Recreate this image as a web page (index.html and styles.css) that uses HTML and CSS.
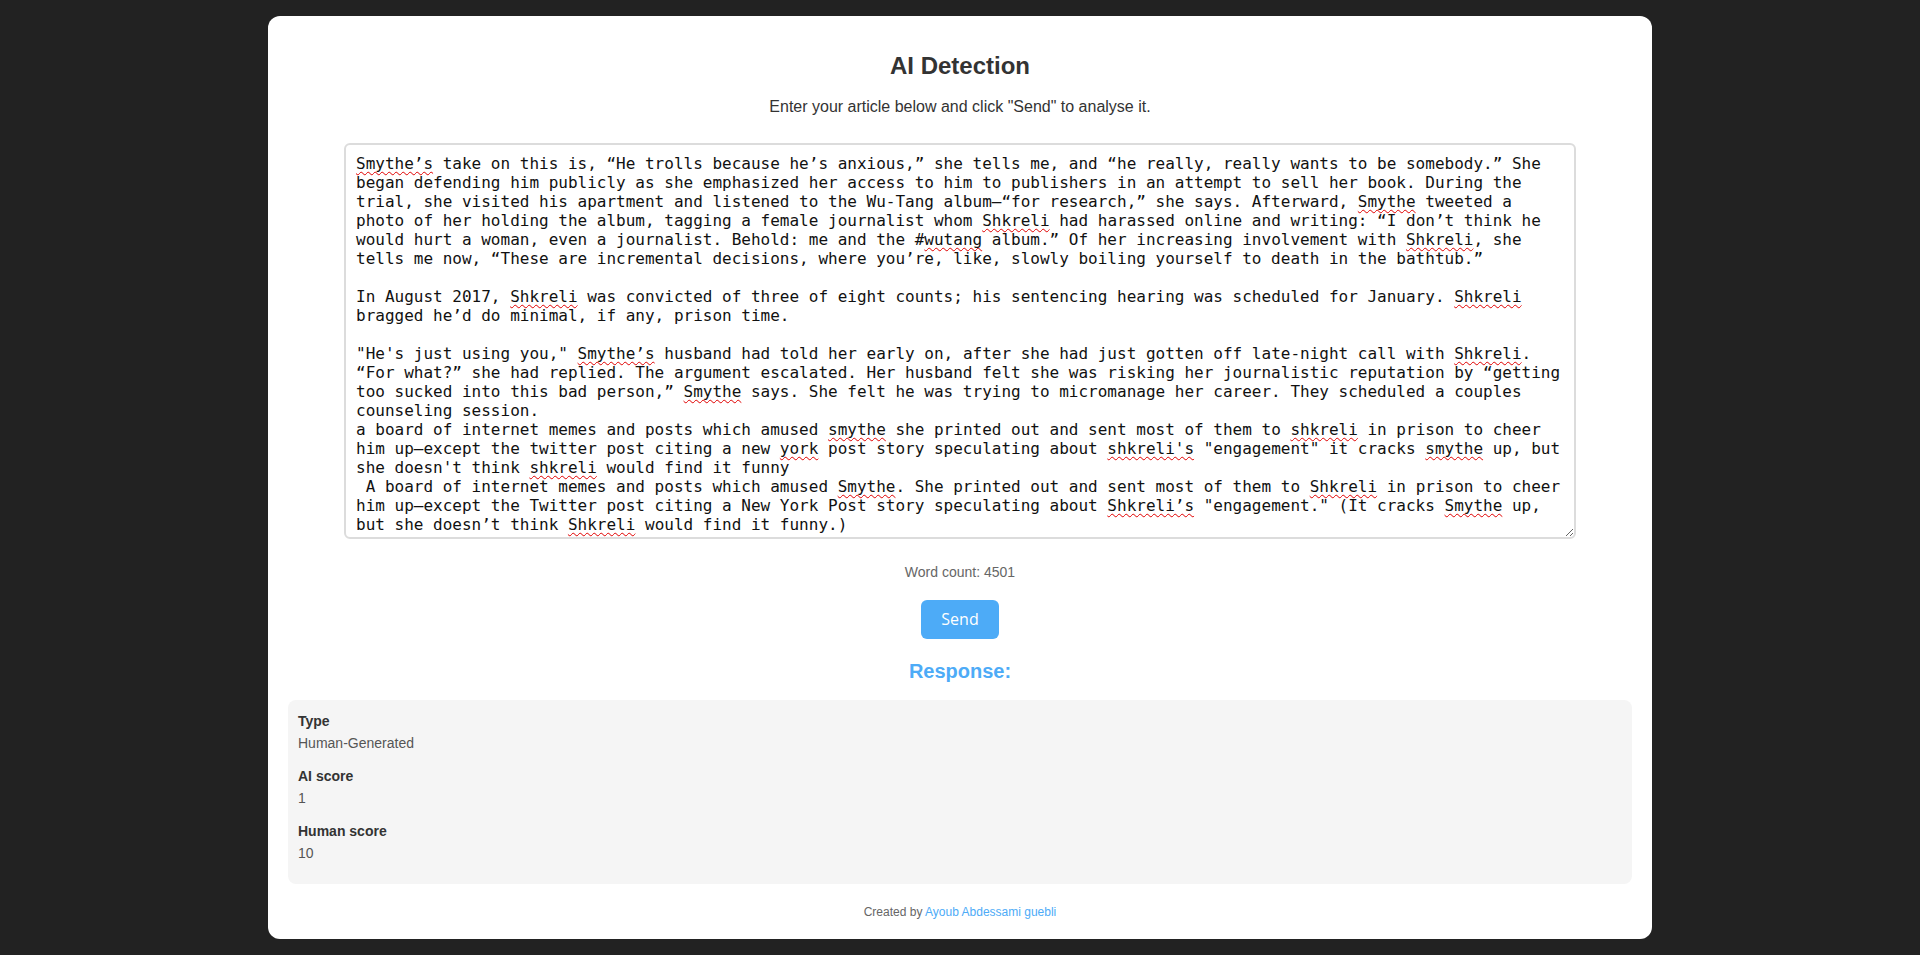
FILE: index.html
```html
<!DOCTYPE html>
<html lang="en">
<head>
<meta charset="utf-8">
<title>AI Detection</title>
<link rel="stylesheet" href="styles.css">
</head>
<body>
<main class="card">
  <h1 class="title">AI Detection</h1>
  <p class="subtitle">Enter your article below and click "Send" to analyse it.</p>
  <div class="editor" role="textbox" aria-multiline="true">
    <div class="ln"><span class="sp">Smythe’s</span> take on this is, “He trolls because he’s anxious,” she tells me, and “he really, really wants to be somebody.” She</div>
    <div class="ln">began defending him publicly as she emphasized her access to him to publishers in an attempt to sell her book. During the</div>
    <div class="ln">trial, she visited his apartment and listened to the Wu-Tang album—“for research,” she says. Afterward, <span class="sp">Smythe</span> tweeted a</div>
    <div class="ln">photo of her holding the album, tagging a female journalist whom <span class="sp">Shkreli</span> had harassed online and writing: “I don’t think he</div>
    <div class="ln">would hurt a woman, even a journalist. Behold: me and the #<span class="sp">wutang</span> album.” Of her increasing involvement with <span class="sp">Shkreli</span>, she</div>
    <div class="ln">tells me now, “These are incremental decisions, where you’re, like, slowly boiling yourself to death in the bathtub.”</div>
    <div class="ln blank"></div>
    <div class="ln">In August 2017, <span class="sp">Shkreli</span> was convicted of three of eight counts; his sentencing hearing was scheduled for January. <span class="sp">Shkreli</span></div>
    <div class="ln">bragged he’d do minimal, if any, prison time.</div>
    <div class="ln blank"></div>
    <div class="ln">"He's just using you," <span class="sp">Smythe’s</span> husband had told her early on, after she had just gotten off late-night call with <span class="sp">Shkreli</span>.</div>
    <div class="ln">“For what?” she had replied. The argument escalated. Her husband felt she was risking her journalistic reputation by “getting</div>
    <div class="ln">too sucked into this bad person,” <span class="sp">Smythe</span> says. She felt he was trying to micromanage her career. They scheduled a couples</div>
    <div class="ln">counseling session.</div>
    <div class="ln">a board of internet memes and posts which amused <span class="sp">smythe</span> she printed out and sent most of them to <span class="sp">shkreli</span> in prison to cheer</div>
    <div class="ln">him up—except the twitter post citing a new <span class="sp">york</span> post story speculating about <span class="sp">shkreli's</span> "engagement" it cracks <span class="sp">smythe</span> up, but</div>
    <div class="ln">she doesn't think <span class="sp">shkreli</span> would find it funny</div>
    <div class="ln"> A board of internet memes and posts which amused <span class="sp">Smythe</span>. She printed out and sent most of them to <span class="sp">Shkreli</span> in prison to cheer</div>
    <div class="ln">him up—except the Twitter post citing a New York Post story speculating about <span class="sp">Shkreli’s</span> "engagement." (It cracks <span class="sp">Smythe</span> up,</div>
    <div class="ln">but she doesn’t think <span class="sp">Shkreli</span> would find it funny.)</div>
  </div>
  <p class="word-count">Word count: 4501</p>
  <button class="send" type="button">Send</button>
  <h2 class="response-title">Response:</h2>
  <section class="result">
    <div class="field">
      <div class="label">Type</div>
      <div class="value">Human-Generated</div>
    </div>
    <div class="field">
      <div class="label">AI score</div>
      <div class="value">1</div>
    </div>
    <div class="field">
      <div class="label">Human score</div>
      <div class="value">10</div>
    </div>
  </section>
  <footer class="footer">Created by <a class="author" href="#">Ayoub Abdessami guebli</a></footer>
</main>
</body>
</html>
```

FILE: styles.css
```css
html, body {
  margin: 0;
  padding: 0;
}

body {
  background: #222222;
  font-family: "Liberation Sans", Arial, sans-serif;
  color: #333;
  padding: 16px 0;
}

.card {
  box-sizing: border-box;
  width: 1384px;
  margin: 0 auto;
  background: #ffffff;
  border-radius: 12px;
  padding: 20px;
  display: flex;
  flex-direction: column;
  align-items: center;
}

.title {
  margin: 16px 0 0;
  font-size: 24px;
  line-height: 28px;
  font-weight: bold;
  color: #333;
}

.subtitle {
  margin: 17px 0 0;
  font-size: 16px;
  line-height: 20px;
  color: #333;
}

.editor {
  box-sizing: border-box;
  margin-top: 26px;
  width: 1232px;
  height: 396px;
  border: 2px solid #dcdcdc;
  border-radius: 6px;
  padding: 9px 10px 10px;
  font-family: "DejaVu Sans Mono", monospace;
  font-size: 16px;
  line-height: 19px;
  color: #111;
  overflow: hidden;
  resize: both;
  text-align: left;
}

.ln {
  white-space: pre;
  height: 19px;
}

.sp {
  text-decoration: underline wavy #e00000;
  text-decoration-thickness: 1px;
  text-decoration-skip-ink: none;
  text-underline-offset: 2px;
}

.word-count {
  margin: 25px 0 0;
  font-size: 14px;
  line-height: 16px;
  color: #666;
}

.send {
  margin-top: 20px;
  height: 39px;
  padding: 0 20px;
  border: none;
  border-radius: 6px;
  background: #4dabf7;
  color: #ffffff;
  font-family: "Open Sans", "Noto Sans", sans-serif;
  font-size: 16px;
  line-height: 39px;
}

.response-title {
  margin: 20px 0 0;
  font-size: 20px;
  line-height: 24px;
  font-weight: bold;
  color: #4dabf7;
}

.result {
  box-sizing: border-box;
  align-self: stretch;
  margin-top: 17px;
  background: #f5f5f5;
  border-radius: 8px;
  padding: 11px 10px 8px;
}

.field {
  margin-bottom: 13px;
}

.label {
  font-size: 14px;
  line-height: 20px;
  font-weight: bold;
  color: #333;
}

.value {
  margin-top: 2px;
  font-size: 14px;
  line-height: 20px;
  color: #555;
}

.footer {
  margin-top: 21px;
  font-size: 12px;
  line-height: 14px;
  color: #666;
}

.author {
  color: #4dabf7;
  text-decoration: none;
}
```
